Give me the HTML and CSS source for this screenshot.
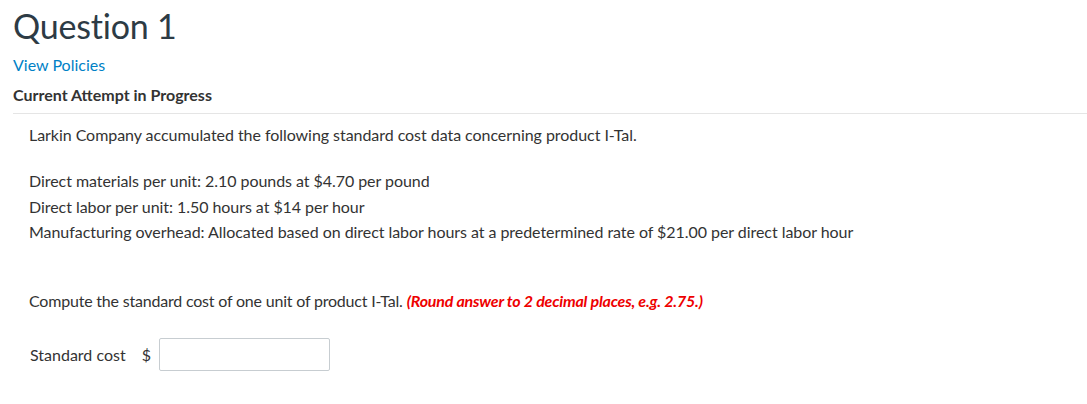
FILE: index.html
```html
<!DOCTYPE html>
<html>
<head>
<meta charset="utf-8">
<link rel="stylesheet" href="styles.css">
</head>
<body>
<div class="page">
  <h1 class="title">Question 1</h1>
  <a class="policies" href="#">View Policies</a>
  <div class="attempt">Current Attempt in Progress</div>
  <div class="question">
    <p class="intro">Larkin Company accumulated the following standard cost data concerning product I-Tal.</p>
    <div class="data">
      <div class="row">Direct materials per unit: 2.10 pounds at $4.70 per pound</div>
      <div class="row">Direct labor per unit: 1.50 hours at $14 per hour</div>
      <div class="row">Manufacturing overhead: Allocated based on direct labor hours at a predetermined rate of $21.00 per direct labor hour</div>
    </div>
    <p class="prompt"><span class="compute">Compute the standard cost of one unit of product I-Tal.</span> <span class="hint">(Round answer to 2 decimal places, e.g. 2.75.)</span></p>
    <div class="answer">
      <span class="label">Standard cost</span>
      <span class="dollar">$</span>
      <input class="field" type="text">
    </div>
  </div>
</div>
</body>
</html>
```
FILE: styles.css
```css
html, body {
  margin: 0;
  padding: 0;
  background: #fff;
}
body {
  font-family: Lato, "Open Sans", sans-serif;
  color: #2d3b45;
}
.page {
  padding: 0 0 0 13px;
}
.title {
  margin: 0;
  padding-top: 5px;
  font-size: 34px;
  font-weight: 400;
  line-height: 42px;
  letter-spacing: -0.2px;
  color: #2d3b45;
}
.policies {
  display: block;
  margin-top: 8px;
  font-size: 16px;
  line-height: 20px;
  color: #0081c6;
  text-decoration: none;
}
.attempt {
  margin-top: 10px;
  font-size: 16px;
  font-weight: 700;
  line-height: 20px;
  color: #333;
}
.question {
  margin-top: 8px;
  border-top: 1px solid #e5e5e5;
  padding-left: 16px;
  color: #333;
}
.intro {
  margin: 10px 0 0;
  font-size: 16px;
  line-height: 22px;
  letter-spacing: -0.05px;
}
.data {
  margin-top: 22px;
  font-size: 16px;
  line-height: 25.5px;
  letter-spacing: -0.05px;
}
.prompt {
  margin: 45px 0 0;
  font-size: 16px;
  line-height: 22px;
}
.compute {
  letter-spacing: -0.2px;
}
.hint {
  color: #e00;
  font-weight: 700;
  font-style: italic;
  letter-spacing: -0.2px;
}
.answer {
  margin-top: 26px;
  display: flex;
  align-items: center;
  font-size: 16px;
}
.label {
  padding-left: 1px;
}
.dollar {
  margin-left: 16px;
}
.field {
  margin-left: 8px;
  width: 171px;
  height: 33px;
  box-sizing: border-box;
  border: 1px solid #c7cdd1;
  border-radius: 2px;
  padding: 0;
}
```
